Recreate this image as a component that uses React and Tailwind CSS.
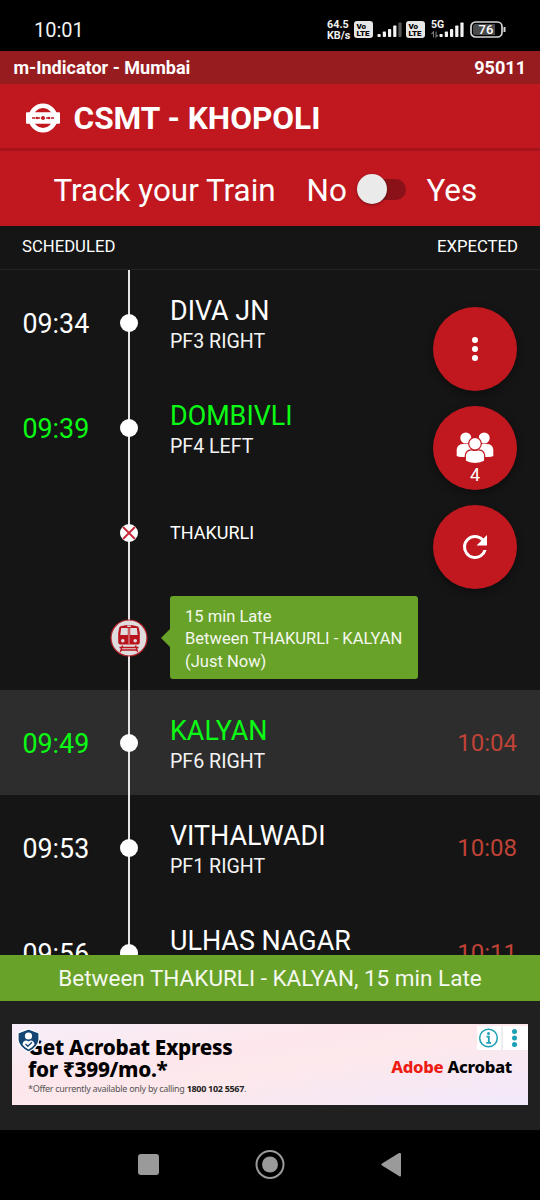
import clsx from "clsx";

const stops = [
  { time: "09:34", name: "DIVA JN", platform: "PF3 RIGHT" },
  { time: "09:39", name: "DOMBIVLI", platform: "PF4 LEFT", fast: true },
  { name: "THAKURLI", skipped: true },
  { train: true },
  {
    time: "09:49",
    name: "KALYAN",
    platform: "PF6 RIGHT",
    expected: "10:04",
    fast: true,
    next: true
  },
  { time: "09:53", name: "VITHALWADI", platform: "PF1 RIGHT", expected: "10:08" },
  { time: "09:56", name: "ULHAS NAGAR", expected: "10:11", last: true }
];

function VolteBadge() {
  return (
    <span className="flex h-[17px] w-[19px] flex-col items-start justify-center rounded-[3px] bg-[#e6e6e6] pl-[2.5px] text-[8px] leading-[7px] font-black text-black">
      <span>Vo</span>
      <span>LTE</span>
    </span>
  );
}

function Signal({ weak }) {
  return (
    <svg width="25" height="16" viewBox="0 0 25 16" fill="#f2f2f2">
      <rect x="0.5" y="12" width="3.2" height="3" rx="0.8" />
      <rect x="5.8" y="9.5" width="3.2" height="5.5" rx="0.8" />
      <rect x="11" y="7" width="3.2" height="8" rx="0.8" />
      <rect x="16.2" y="3.5" width="3.2" height="11.5" rx="0.8" />
      <rect x="21.4" y="0.5" width="3.2" height="14.5" rx="0.8" fill={weak ? "#555" : "#f2f2f2"} />
    </svg>
  );
}

function StatusBar() {
  return (
    <div className="flex h-[51px] shrink-0 items-center bg-black pt-2 pr-[34px] pl-[34px] text-[#f2f2f2]">
      <span className="text-[20px] leading-6">10:01</span>
      <div className="ml-auto flex items-center">
        <div className="w-[27px] text-[10.8px] leading-[11px] font-bold">
          <div>64.5</div>
          <div>KB/s</div>
        </div>
        <div className="flex">
          <VolteBadge />
        </div>
        <div className="ml-1">
          <Signal weak />
        </div>
        <div className="ml-1 flex">
          <VolteBadge />
        </div>
        <div className="relative ml-[14px]">
          <Signal />
          <span className="absolute -top-[2px] -left-[8px] text-[10.5px] leading-[10px] font-bold">5G</span>
          <svg className="absolute top-[9px] -left-[8px]" width="8" height="7" viewBox="0 0 8 7" fill="none" stroke="#777" strokeWidth="1.1">
            <path d="M2.5 6.5V1L0.5 3M5 0.5V6L7 4" />
          </svg>
        </div>
        <svg className="ml-[6px]" width="36" height="17" viewBox="0 0 36 17">
          <rect x="1" y="1" width="31" height="15" rx="4.5" fill="none" stroke="#d5d5d5" strokeWidth="1.7" />
          <path d="M5.5 3H25V14H5.5A2.5 2.5 0 0 1 3 11.5V5.5A2.5 2.5 0 0 1 5.5 3Z" fill="#4a4a4a" />
          <path d="M34.5 6V11" stroke="#d5d5d5" strokeWidth="2" />
          <text x="16" y="13" textAnchor="middle" fontSize="13" fontWeight="500" fill="#fff">76</text>
        </svg>
      </div>
    </div>
  );
}

function RouteIcon() {
  return (
    <svg width="34" height="30" viewBox="0 0 34 30" fill="none">
      <circle cx="17" cy="15" r="12.2" stroke="#fff" strokeWidth="4.6" />
      <rect x="0" y="9.2" width="34" height="11.6" rx="1" fill="#fff" />
      <path d="M6 15H28" stroke="#c11820" strokeWidth="1.3" strokeDasharray="3.5 1.2" />
      <circle cx="17" cy="15" r="1.9" fill="#c11820" />
      <circle cx="11" cy="15" r="1.2" fill="#c11820" />
      <circle cx="23" cy="15" r="1.2" fill="#c11820" />
    </svg>
  );
}

function TrainIcon() {
  return (
    <svg width="38" height="38" viewBox="0 0 38 38">
      <circle cx="19" cy="19" r="18" fill="#dedcdc" stroke="#b5222b" strokeWidth="1.2" />
      <path d="M9.3 8.500Q9.500 7.300 12 7Q19 5.200 26 7Q28.500 7.300 28.700 8.500L29.800 14V23.300Q29.800 25.500 27.800 25.500H10.200Q8.200 25.500 8.200 23.300V14Z" fill="#b9141d" />
      <path d="M11.200 9H17.800V16H10.300ZM20.200 9H26.800L27.700 16H20.200Z" fill="#dedcdc" />
      <rect x="17" y="6.500" width="4" height="1.500" rx="0.700" fill="#dedcdc" />
      <path d="M19 9V25" stroke="#e5a8ab" strokeWidth="1" />
      <circle cx="12.800" cy="21.700" r="1.800" fill="#dedcdc" />
      <circle cx="25.200" cy="21.700" r="1.800" fill="#dedcdc" />
      <path d="M9.500 28.500H28.500M12.500 26.500L10.300 33M25.500 26.500L27.700 33M11.500 31H26.500" fill="none" stroke="#b9141d" strokeWidth="1.300" />
    </svg>
  );
}

function PeopleIcon() {
  return (
    <svg width="38" height="32" viewBox="0 0 38 32" fill="#fff">
      <circle cx="9.8" cy="6" r="5.5" />
      <circle cx="28.2" cy="6" r="5.5" />
      <path d="M0.7 24V17.5Q1.5 12 7 12H13Q16 12.5 17 15V25H6Q2 25 0.7 24Z" />
      <path d="M37.3 24V17.5Q36.5 12 31 12H25Q22 12.5 21 15V25H32Q36 25 37.3 24Z" />
      <g stroke="#c11820" strokeWidth="1.2">
        <circle cx="19" cy="11.7" r="6.3" />
        <path d="M9.3 29V23.5Q10 18 15 17.8Q19 19.2 23 17.8Q28 18 28.7 23.5V29Q25 31.5 19 31.5T9.3 29Z" />
      </g>
    </svg>
  );
}

function Marker({ stop }) {
  if (stop.train) return <TrainIcon />;
  if (stop.skipped) {
    return (
      <svg width="18" height="18" viewBox="0 0 18 18">
        <circle cx="9" cy="9" r="9" fill="#fff" />
        <path d="M3 3L15 15M15 3L3 15" stroke="#c8283c" strokeWidth="1.9" />
      </svg>
    );
  }
  return <span className="h-[18px] w-[18px] rounded-full bg-white" />;
}

function LiveStatus() {
  return (
    <div className="flex items-center">
      <span className="-ml-[9px] h-0 w-0 border-y-[9px] border-r-[9px] border-y-transparent border-r-[#68a229]" />
      <div className="h-[83px] w-[248px] rounded-[3px] bg-[#68a229] px-[15px] pt-[9.5px] text-[16.55px] leading-[22.5px] whitespace-nowrap text-[#f4f8ee]">
        <div>15 min Late</div>
        <div>Between THAKURLI - KALYAN</div>
        <div>(Just Now)</div>
      </div>
    </div>
  );
}

function StopRow({ stop }) {
  return (
    <div
      className={clsx(
        "flex shrink-0",
        stop.last ? "h-[55px] overflow-hidden" : "h-[105px]",
        stop.next && "bg-[#2d2d2d]"
      )}
    >
      <div
        className={clsx(
          "flex h-[105px] w-[109px] items-center pt-1 pl-[22.5px] text-[26.8px]",
          stop.fast ? "text-[#0bfb14]" : "text-white"
        )}
      >
        {stop.time}
      </div>
      <div className="relative flex h-[105px] w-10 items-center justify-center">
        <span className="absolute inset-y-0 left-[19px] w-[2px] bg-[#e4e4e4]" />
        <span className="relative flex">
          <Marker stop={stop} />
        </span>
      </div>
      <div className="flex h-[105px] flex-1 flex-col justify-center pl-[21px]">
        {stop.train && <LiveStatus />}
        {stop.skipped && <div className="pt-px text-[18px] leading-6 text-white">{stop.name}</div>}
        {stop.time && (
          <>
            <div
              className={clsx(
                "mt-[3px] text-[26.9px] leading-9 whitespace-nowrap",
                stop.fast ? "text-[#0bfb14]" : "text-white"
              )}
            >
              {stop.name}
            </div>
            <div className="h-[26px] text-[19.6px] leading-[26px] text-[#f4f4f4]">{stop.platform}</div>
          </>
        )}
      </div>
      <div className="flex h-[105px] items-center pt-px pr-[23px] text-[24px] text-[#bf4236]">{stop.expected}</div>
    </div>
  );
}

function RoundButton({ children }) {
  return (
    <button
      type="button"
      className="flex h-[84px] w-[84px] flex-col items-center justify-center rounded-full bg-[#c11820] text-white shadow-[0_3px_8px_rgba(0,0,0,0.4)]"
    >
      {children}
    </button>
  );
}

function AdBanner() {
  return (
    <div className="relative mx-3 mt-[22px] flex h-[81px] items-start bg-[linear-gradient(170deg,#f6eefa_0%,#fde7ec_35%,#fde8ec_55%,#f1e9fb_100%)] pl-4 text-black">
      <div className="pt-3 font-['Noto_Sans'] whitespace-nowrap">
        <div className="text-[20.7px] leading-[22px] font-extrabold tracking-[-0.3px]">Get Acrobat Express</div>
        <div className="text-[20.7px] leading-[22px] font-extrabold tracking-[-0.3px]">for ₹399/mo.*</div>
        <div className="mt-[3px] text-[9px] leading-[12px] tracking-[-0.3px] text-[#555]">
          *Offer currently available only by calling <b className="text-[#222]">1800 102 5567</b>.
        </div>
      </div>
      <div className="mt-[33px] mr-4 ml-auto font-['Noto_Sans'] text-[16.7px] leading-5 font-extrabold tracking-[-0.3px] whitespace-nowrap">
        <span className="text-[#ee1c12]">Adobe</span> Acrobat
      </div>
      <svg className="absolute top-1 left-[5px]" width="23" height="25" viewBox="0 0 23 25">
        <path d="M11.5 1L22 5V12Q21 19.5 11.5 24Q2 19.5 1 12V5Z" fill="#164673" stroke="#fff" strokeWidth="1.2" />
        <circle cx="11.5" cy="8" r="3.6" fill="#fff" />
        <path d="M5.5 16.5Q6 12.5 9.5 12.5L11.5 13.5L13.5 12.5Q17 12.5 17.5 16.5Q15.5 19.5 11.5 21.5Q7.5 19.5 5.5 16.5Z" fill="#fff" />
        <path d="M8.5 16L10.8 18.3L15 14.3" fill="none" stroke="#164673" strokeWidth="1.3" />
      </svg>
      <div className="absolute top-[2px] right-0 flex h-6 w-[51px] bg-white">
        <svg width="51" height="24" viewBox="0 0 51 24">
          <circle cx="11.5" cy="12" r="8.8" fill="none" stroke="#1b9fb4" strokeWidth="1.5" />
          <circle cx="11.5" cy="7.5" r="1.5" fill="#1b9fb4" />
          <path d="M9.5 10.7H11.8V16.5M9.3 16.8H14" fill="none" stroke="#1b9fb4" strokeWidth="1.8" />
          <path d="M25 0V24" stroke="#ddd" />
          <circle cx="37.5" cy="5.5" r="2.5" fill="#1b9fb4" />
          <circle cx="37.5" cy="12" r="2.5" fill="#1b9fb4" />
          <circle cx="37.5" cy="18.5" r="2.5" fill="#1b9fb4" />
        </svg>
      </div>
    </div>
  );
}

export default function App() {
  return (
    <div className="flex h-[1200px] w-[540px] flex-col overflow-hidden bg-[#151515] font-[Roboto,sans-serif] text-white">
      <StatusBar />
      <div className="flex h-[33px] shrink-0 items-center justify-between bg-[#971c1f] pt-px pr-[14px] pl-[13.5px] text-[18.05px] font-bold">
        <span>m-Indicator - Mumbai</span>
        <span>95011</span>
      </div>
      <div className="flex h-[67px] shrink-0 items-center border-b-[3px] border-[#a5141b] bg-[#c11820] pt-1 pl-[26px]">
        <RouteIcon />
        <h1 className="ml-[13.5px] pt-[2px] text-[31.6px] font-bold">CSMT - KHOPOLI</h1>
      </div>
      <div className="flex h-[75px] shrink-0 items-center bg-[#c11820] pt-[4px] pl-[53.5px] text-[31.4px]">
        <span className="w-[222px] whitespace-nowrap">Track your Train</span>
        <span className="ml-[31px] w-[40px]">No</span>
        <span className="ml-[9px] flex h-[30px] w-[50px] items-center pb-[3px]">
          <span className="relative ml-[8px] h-[21px] w-[42px] rounded-full bg-[#8a1117]">
            <span className="absolute -top-[5px] -left-[7px] h-[30px] w-[30px] rounded-full bg-[#eaeaea] shadow-[0_1px_3px_rgba(0,0,0,0.4)]" />
          </span>
        </span>
        <span className="ml-[21px]">Yes</span>
      </div>
      <div className="flex h-11 shrink-0 items-center justify-between border-b border-[#222] px-[22px] pb-px text-[16.7px]">
        <span>SCHEDULED</span>
        <span>EXPECTED</span>
      </div>
      <div className="relative h-[685px] shrink-0 overflow-hidden">
        {stops.map((stop, index) => (
          <StopRow key={index} stop={stop} />
        ))}
        <div className="absolute top-[37px] right-[23px] flex flex-col gap-[15px]">
          <RoundButton>
            <svg width="6" height="26" viewBox="0 0 6 26" fill="#fff">
              <circle cx="3" cy="4" r="3" />
              <circle cx="3" cy="13" r="3" />
              <circle cx="3" cy="22" r="3" />
            </svg>
          </RoundButton>
          <RoundButton>
            <span className="mt-[22px]">
              <PeopleIcon />
            </span>
            <span className="text-[18px] leading-[22px]">4</span>
          </RoundButton>
          <RoundButton>
            <svg width="36" height="36" viewBox="0 0 24 24" fill="#fff">
              <path d="M17.65 6.35A7.96 7.96 0 0 0 12 4a8 8 0 1 0 7.73 10h-2.08A6 6 0 1 1 12 6c1.66 0 3.14.69 4.22 1.78L13 11h7V4z" />
            </svg>
          </RoundButton>
        </div>
      </div>
      <div className="flex h-[46px] shrink-0 items-center justify-center bg-[#68a229] pt-px text-[22.5px] text-[#f4f8ee]">
        Between THAKURLI - KALYAN, 15 min Late
      </div>
      <div className="h-[129px] shrink-0 bg-[#202020] pt-px">
        <AdBanner />
      </div>
      <div className="flex flex-1 items-center bg-black pl-[137px]">
        <svg width="266" height="32" viewBox="0 0 266 32" fill="#9a9a9a">
          <rect x="1" y="5" width="21" height="21" rx="3" />
          <circle cx="133" cy="15.5" r="13.5" fill="none" stroke="#9a9a9a" strokeWidth="2" />
          <circle cx="133" cy="15.5" r="8" />
          <path d="M245 14.5L262 4Q264 3.5 264 5V26Q264 28.5 262 27L245 16.5Q243.5 15.5 245 14.5Z" />
        </svg>
      </div>
    </div>
  );
}
